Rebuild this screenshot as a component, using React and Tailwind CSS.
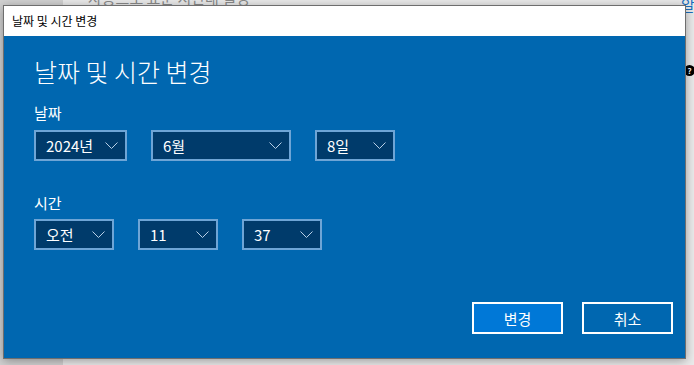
import React from "react";

const font = { fontFamily: '"Noto Sans CJK KR", "Noto Sans", sans-serif' };

const Chevron = () => (
  <svg width="13" height="7" viewBox="0 0 13 7" className="shrink-0">
    <polyline points="0.5,0.5 6.5,6.5 12.5,0.5" fill="none" stroke="#b7cfe6" strokeWidth="1" />
  </svg>
);

const Combo = ({ value, width }) => (
  <div
    className={`${width} h-[31px] flex items-center justify-between border-2 border-[#6ea5d6] bg-[#003b6b] pl-[10px] pr-[7px] text-white text-[15px]`}
  >
    <span className="leading-none">{value}</span>
    <Chevron />
  </div>
);

const Button = ({ label, primary }) => (
  <button
    className={`w-[91px] h-[32px] border-2 border-white text-white text-[15px] leading-none ${
      primary ? "bg-[#0078d7]" : "bg-[#0067b0]"
    }`}
  >
    {label}
  </button>
);

export default function App() {
  return (
    <div className="relative w-[694px] h-[365px] overflow-hidden bg-[#ebebeb]" style={font}>
      {/* desktop behind the dialog */}
      <div className="absolute left-0 top-0 w-[63px] h-[365px] bg-[#d2d2d2]" />
      <div className="absolute left-[88px] top-[-13px] text-[15px] text-[#8a8a8a] whitespace-nowrap">
        자동으로 표준 시간대 설정
      </div>
      <div className="absolute left-[681px] top-[-6px] text-[15px] text-[#1a6fc0]">알</div>
      <div className="absolute left-[684px] top-[65px] w-[11px] h-[11px] rounded-full bg-black text-white text-[8px] leading-[11px] text-center font-bold">
        ?
      </div>

      {/* dialog window */}
      <div className="relative ml-[3px] mt-[5px] w-[683px] h-[354px] border border-[#6e6e6e] shadow-[0_2px_10px_rgba(0,0,0,0.35)] flex flex-col">
        <div className="h-[30px] bg-white flex items-center pl-[8px] text-[12px] text-black">
          날짜 및 시간 변경
        </div>
        <div className="flex-1 bg-[#0067b0] text-white flex flex-col pl-[30px] pr-[12px]">
          <div className="mt-[19px] text-[25px] leading-[32px] font-light">날짜 및 시간 변경</div>

          <div className="mt-[16px] text-[15px] leading-[20px]">날짜</div>
          <div className="mt-[7px] flex gap-[24px]">
            <Combo value="2024년" width="w-[93px]" />
            <Combo value="6월" width="w-[140px]" />
            <Combo value="8일" width="w-[80px]" />
          </div>

          <div className="mt-[32px] text-[15px] leading-[20px]">시간</div>
          <div className="mt-[6px] flex gap-[24px]">
            <Combo value="오전" width="w-[80px]" />
            <Combo value="11" width="w-[80px]" />
            <Combo value="37" width="w-[80px]" />
          </div>

          <div className="mt-auto mb-[24px] flex justify-end gap-[19px]">
            <Button label="변경" primary />
            <Button label="취소" />
          </div>
        </div>
      </div>
    </div>
  );
}
